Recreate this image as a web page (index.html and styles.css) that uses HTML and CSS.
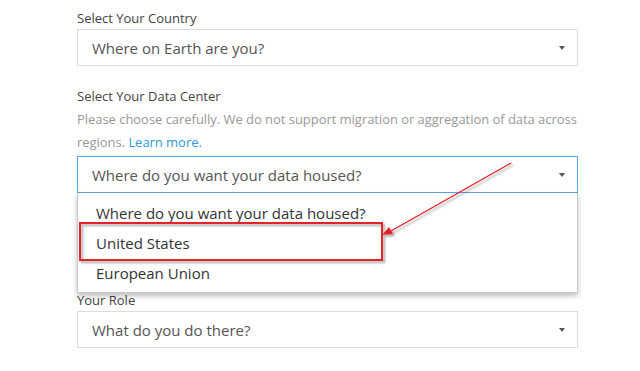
FILE: index.html
```html
<!DOCTYPE html>
<html lang="en">
<head>
    <meta charset="UTF-8">
    <meta name="viewport" content="width=device-width, initial-scale=1.0">
    <title>Select Your Data Center</title>
    <link rel="stylesheet" href="styles.css">
</head>
<body>
<form class="signup">
    <div class="field">
        <label class="label">Select Your Country</label>
        <div class="select">
            <span class="select-text">Where on Earth are you?</span>
            <span class="caret"></span>
        </div>
    </div>

    <div class="field">
        <label class="label">Select Your Data Center</label>
        <p class="help">Please choose carefully. We do not support migration or aggregation of data across regions. <a href="#">Learn more.</a></p>
        <div class="select-wrap">
            <div class="select focused">
                <span class="select-text">Where do you want your data housed?</span>
                <span class="caret"></span>
            </div>
            <ul class="options">
                <li>Where do you want your data housed?</li>
                <li>United States</li>
                <li>European Union</li>
            </ul>
        </div>
    </div>

    <div class="field role">
        <label class="label">Your Role</label>
        <div class="select">
            <span class="select-text">What do you do there?</span>
            <span class="caret"></span>
        </div>
    </div>
</form>

<!-- annotation drawn over the screenshot -->
<svg class="markup" width="640" height="371" viewBox="0 0 640 371">
    <defs>
        <filter id="shade" x="-10%" y="-10%" width="130%" height="140%">
            <feDropShadow dx="2" dy="2" stdDeviation="1.2" flood-color="#000" flood-opacity="0.35"/>
        </filter>
    </defs>
    <g filter="url(#shade)">
        <rect x="80" y="223" width="302" height="37" fill="none" stroke="#e3242b" stroke-width="2"/>
        <line x1="511" y1="163" x2="391" y2="231" stroke="#e3242b" stroke-width="1.4"/>
        <polygon points="382,235 389,227 393,234" fill="#e3242b"/>
    </g>
</svg>
</body>
</html>
```

FILE: styles.css
```css
body {
    margin: 0;
    background: #fff;
    font-family: 'Open Sans', 'Noto Sans', sans-serif;
    color: #444;
}
.signup {
    width: 501px;
    margin-left: 77px;
    padding-top: 9px;
}
.field {
    margin-bottom: 21px;
}
.field.role {
    margin-top: 98px;
}
.label {
    display: block;
    font-size: 13px;
    line-height: 18px;
    margin-bottom: 2px;
    color: #444;
}
.help {
    margin: 3px -8px 2px 0;
    font-size: 13px;
    letter-spacing: -0.04px;
    line-height: 23px;
    color: #999;
}
.help a {
    color: #2e9ad8;
    text-decoration: none;
}
.select-wrap {
    position: relative;
}
.select {
    height: 35px;
    border: 1px solid #ddd;
    background: #fff;
    display: flex;
    align-items: center;
    justify-content: space-between;
    padding: 0 12px 0 14px;
}
.select.focused {
    border-color: #5aa6e8;
}
.select-text {
    font-size: 15px;
    color: #555;
}
.caret {
    width: 0;
    height: 0;
    border-left: 3.5px solid transparent;
    border-right: 3.5px solid transparent;
    border-top: 4px solid #555;
}
.options {
    position: absolute;
    top: 100%;
    left: 0;
    right: 0;
    z-index: 2;
    margin: 0;
    padding: 5px 0 4px;
    list-style: none;
    background: #fff;
    border: 1px solid #c8c8c8;
    border-top: none;
    box-shadow: 0 3px 5px rgba(0, 0, 0, 0.25);
}
.options li {
    height: 30px;
    line-height: 30px;
    padding-left: 18px;
    font-size: 15px;
    color: #333;
}
.markup {
    position: absolute;
    top: 0;
    left: 0;
    z-index: 5;
    pointer-events: none;
}
```
